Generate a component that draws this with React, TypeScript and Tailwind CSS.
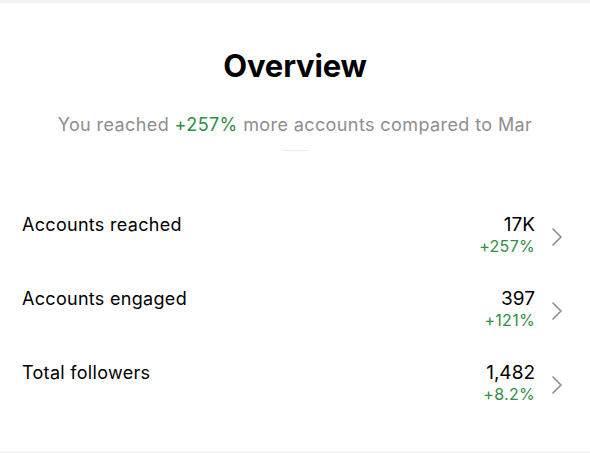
const rows = [
  { label: "Accounts reached", value: "17K", change: "+257%" },
  { label: "Accounts engaged", value: "397", change: "+121%" },
  { label: "Total followers", value: "1,482", change: "+8.2%" },
];

function Chevron() {
  return (
    <svg width="12" height="20" viewBox="0 0 12 20" fill="none" className="shrink-0 mt-[4px]">
      <path d="M2 2l8 8-8 8" stroke="#8a8a8a" strokeWidth="1.6" strokeLinecap="round" strokeLinejoin="round" />
    </svg>
  );
}

export default function App() {
  return (
    <div className="w-[590px] h-[453px] bg-white flex flex-col overflow-hidden font-['Inter',sans-serif]">
      <div className="h-[3px] bg-[#f2f2f2]" />
      <div className="flex-1 flex flex-col">
        <h1 className="mt-[45px] text-center text-[31px] font-bold text-black tracking-[-0.2px] leading-[36px]">Overview</h1>
        <p className="mt-[30px] text-center text-[18px] text-[#8e8e8e] leading-[22px] tracking-[0.4px]">
          You reached <span className="text-[#2f8f45]">+257%</span> more accounts compared to Mar
        </p>
        <div className="mx-auto mt-[14px] w-[26px] h-px bg-[#ececec]" />
        <div className="mt-[63px] flex flex-col gap-[32px] pl-[22px] pr-[27px]">
          {rows.map((r) => (
            <div key={r.label} className="flex items-start justify-between">
              <span className="text-[18px] text-black leading-[22px] tracking-[0.3px]">{r.label}</span>
              <div className="flex items-center gap-[16px]">
                <div className="flex flex-col items-end">
                  <span className="text-[19px] text-black leading-[22px]">{r.value}</span>
                  <span className="text-[16px] text-[#2f8f45] leading-[20px] tracking-[0.3px]">{r.change}</span>
                </div>
                <Chevron />
              </div>
            </div>
          ))}
        </div>
      </div>
      <div className="h-[2px] bg-[#f4f4f4]" />
    </div>
  );
}
